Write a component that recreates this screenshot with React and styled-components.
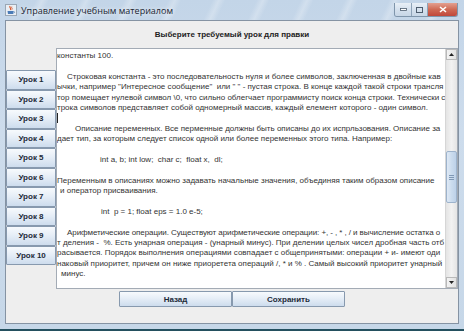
import React from 'react';
import styled, { createGlobalStyle } from 'styled-components';

const GlobalStyle = createGlobalStyle`
  html, body {
    margin: 0;
    padding: 0;
    background: #1f4f5f;
  }
  body {
    font-family: "Liberation Sans", Arial, sans-serif;
  }
`;

const Frame = styled.div`
  width: 464px;
  height: 331px;
  box-sizing: border-box;
  display: flex;
  flex-direction: column;
  background: linear-gradient(180deg, #c3d5e8 0%, #cddcec 40%, #c6d7e8 100%);
  border-bottom: 2px solid #24505f;
  padding: 0 5px 5px 5px;
`;

const TitleBar = styled.div`
  height: 20px;
  display: flex;
  align-items: center;
  gap: 4px;
  background: repeating-linear-gradient(
    115deg,
    rgba(255, 255, 255, 0) 0px,
    rgba(255, 255, 255, 0) 28px,
    rgba(255, 255, 255, 0.25) 34px,
    rgba(255, 255, 255, 0) 40px
  );
`;

const Title = styled.span`
  flex: 1;
  font-family: "Open Sans", "Liberation Sans", sans-serif;
  font-size: 9px;
  color: #1b2633;
  text-shadow: 0 0 4px rgba(255, 255, 255, 0.9);
  white-space: nowrap;
`;

const Captions = styled.div`
  display: flex;
  align-self: flex-start;
  margin-top: 3px;
  margin-right: 1px;
  height: 13px;
  border: 1px solid #7f95ab;
  border-top: none;
  border-radius: 0 0 3px 3px;
  overflow: hidden;
`;

const CaptionButton = styled.div`
  width: ${(p) => p.$w}px;
  display: flex;
  align-items: center;
  justify-content: center;
  background: ${(p) =>
    p.$close
      ? 'linear-gradient(180deg, #e3a090 0%, #cf6a55 50%, #c0473a 100%)'
      : 'linear-gradient(180deg, #e8eff6 0%, #d5e1ee 50%, #c7d6e6 100%)'};
  border-left: ${(p) => (p.$first ? 'none' : '1px solid #8ea3b8')};
`;

const Client = styled.div`
  flex: 1;
  min-width: 0;
  display: flex;
  flex-direction: column;
  background: #eeeeee;
  border: 1px solid #8593a3;
`;

const Heading = styled.div`
  height: 27px;
  display: flex;
  align-items: center;
  justify-content: center;
  font-size: 8px;
  font-weight: bold;
  color: #222;
`;

const Body = styled.div`
  display: flex;
  height: 241px;
  min-width: 0;
`;

const LessonColumn = styled.div`
  width: 50px;
  flex-shrink: 0;
  padding-top: 22px;
  display: grid;
  grid-template-rows: repeat(10, 19.5px);
  align-content: start;
`;

const LessonButton = styled.button`
  margin: 0;
  padding: 0;
  border: 1px solid #8799ae;
  border-radius: 1px;
  background: linear-gradient(180deg, #f7fafd 0%, #e6eef7 45%, #cddced 100%);
  font-family: "Liberation Sans", Arial, sans-serif;
  font-size: 8px;
  font-weight: bold;
  white-space: nowrap;
  color: #1d2a38;
`;

const TextPane = styled.div`
  flex: 1;
  min-width: 0;
  display: flex;
  border: 1px solid #a3abb5;
  background: #fff;
`;

const Viewport = styled.div`
  flex: 1;
  min-width: 0;
  overflow: hidden;
  padding-top: 2px;
  font-size: 8px;
  color: #333;
`;

const Line = styled.div`
  height: 10.4px;
  line-height: 10.4px;
  white-space: pre;
  padding-left: ${(p) => p.$indent}px;
  letter-spacing: ${(p) => (p.$tight ? '-0.08px' : 'normal')};
`;

const Caret = styled.span`
  display: inline-block;
  width: 1px;
  height: 10px;
  background: #222;
  vertical-align: top;
`;

const ScrollBar = styled.div`
  width: 11px;
  flex-shrink: 0;
  display: flex;
  flex-direction: column;
  background: linear-gradient(90deg, #e4e4e4, #f2f2f2 50%, #e4e4e4);
  border-left: 1px solid #d6d6d6;
`;

const ArrowButton = styled.div`
  height: 11px;
  display: flex;
  align-items: center;
  justify-content: center;
  background: linear-gradient(90deg, #f3f3f3, #e2e2e2);
  border: 1px solid #b9b9b9;
  box-sizing: border-box;
`;

const Track = styled.div`
  flex: 1;
  display: flex;
  flex-direction: column;
`;

const Gap = styled.div`
  height: ${(p) => p.$h}px;
`;

const Thumb = styled.div`
  height: 50px;
  display: flex;
  flex-direction: column;
  align-items: center;
  justify-content: center;
  gap: 1px;
  border: 1px solid #9db3cc;
  border-radius: 2px;
  background: linear-gradient(90deg, #dfe9f5, #cbdcee 50%, #bdd1e8);
`;

const Grip = styled.div`
  width: 5px;
  height: 1px;
  background: #7f98b5;
`;

const Footer = styled.div`
  flex: 1;
  display: flex;
  justify-content: center;
  align-items: flex-start;
  padding-top: 2px;
`;

const FooterButton = styled.button`
  width: 113px;
  height: 16px;
  margin: 0;
  padding: 0;
  border: 1px solid #8799ae;
  border-radius: 1px;
  background: linear-gradient(180deg, #f7fafd 0%, #e6eef7 45%, #cddced 100%);
  font-family: "Liberation Sans", Arial, sans-serif;
  font-size: 8px;
  font-weight: bold;
  color: #1d2a38;
`;

const lines = [
  { indent: 0, text: 'константы 100.' },
  { indent: 0, text: '' },
  { indent: 10, text: 'Строковая константа - это последовательность нуля и более символов, заключенная в двойные кав' },
  { indent: 0, text: 'ычки, например "Интересное сообщение"  или " " - пустая строка. В конце каждой такой строки трансля' },
  { indent: 0, text: 'тор помещает нулевой символ \\0, что сильно облегчает программисту поиск конца строки. Технически с' },
  { indent: 0, text: 'трока символов представляет собой одномерный массив, каждый елемент которого - один символ.' },
  { indent: 0, text: '', caret: true },
  { indent: 18, text: 'Описание переменных. Все перменные должны быть описаны до их испрльзования. Описание за' },
  { indent: 0, text: 'дает тип, за которым следует список одной или более переменных этого типа. Например:' },
  { indent: 0, text: '' },
  { indent: 43, text: 'int a, b; int low;  char c;  float x,  dl;' },
  { indent: 0, text: '' },
  { indent: 0, text: 'Переменным в описаниях можно задавать начальные значения, объединяя таким образом описание' },
  { indent: 3, text: 'и оператор присваивания.' },
  { indent: 0, text: '' },
  { indent: 44, text: 'int  p = 1; float eps = 1.0 e-5;' },
  { indent: 0, text: '' },
  { indent: 10, tight: true, text: 'Арифметические операции. Существуют арифметические операции: +, - , * , / и вычисление остатка о' },
  { indent: 0, text: 'т деления -  %. Есть унарная операция - (унарный минус). При делении целых чисел дробная часть отб' },
  { indent: 0, text: 'расывается. Порядок выполнения операциями совпадает с общепринятыми: операции + и- имеют оди' },
  { indent: 0, text: 'наковый приоритет, причем он ниже приоретета операций /, * и % . Самый высокий приоритет унарный' },
  { indent: 4, text: 'минус.' },
];

function JavaIcon() {
  return (
    <svg width="12" height="12" viewBox="0 0 12 12">
      <rect x="0.5" y="0.5" width="11" height="11" fill="#e9eef4" stroke="#9aa7b5" />
      <path d="M5 2 C4 3.5 6.5 4 5.5 6" stroke="#d9572b" strokeWidth="1.2" fill="none" />
      <path d="M6.8 2.6 C6 3.8 7.8 4.2 7 5.6" stroke="#d9572b" strokeWidth="0.9" fill="none" />
      <path d="M2.5 7 H8.5 L8 10 H3 Z" fill="#4a7bb7" />
      <path d="M8.5 7.5 C10 7.5 10 9 8.2 9" stroke="#4a7bb7" strokeWidth="0.8" fill="none" />
    </svg>
  );
}

function ArrowIcon({ down }) {
  return (
    <svg width="5" height="3" viewBox="0 0 5 3">
      <path d={down ? 'M0 0 H5 L2.5 3 Z' : 'M0 3 H5 L2.5 0 Z'} fill="#222" />
    </svg>
  );
}

export default function App() {
  return (
    <>
      <GlobalStyle />
      <Frame>
        <TitleBar>
          <JavaIcon />
          <Title>Управление учебным материалом</Title>
          <Captions>
            <CaptionButton $w={16} $first>
              <svg width="7" height="3" viewBox="0 0 7 3">
                <rect x="0.5" y="0.5" width="6" height="2" fill="#fff" stroke="#4d5d6e" strokeWidth="0.8" />
              </svg>
            </CaptionButton>
            <CaptionButton $w={15}>
              <svg width="7" height="6" viewBox="0 0 7 6">
                <rect x="0.5" y="0.5" width="6" height="5" fill="none" stroke="#4d5d6e" strokeWidth="1" />
              </svg>
            </CaptionButton>
            <CaptionButton $w={29} $close>
              <svg width="8" height="7" viewBox="0 0 8 7">
                <path d="M1 1 L7 6 M7 1 L1 6" stroke="#fff" strokeWidth="1.6" />
              </svg>
            </CaptionButton>
          </Captions>
        </TitleBar>
        <Client>
          <Heading>Выберите требуемый урок для правки</Heading>
          <Body>
            <LessonColumn>
              {Array.from({ length: 10 }, (_, i) => (
                <LessonButton key={i}>Урок {i + 1}</LessonButton>
              ))}
            </LessonColumn>
            <TextPane>
              <Viewport>
                {lines.map((l, i) => (
                  <Line key={i} $indent={l.indent} $tight={l.tight}>
                    {l.caret ? <Caret /> : l.text}
                  </Line>
                ))}
              </Viewport>
              <ScrollBar>
                <ArrowButton>
                  <ArrowIcon />
                </ArrowButton>
                <Track>
                  <Gap $h={91} />
                  <Thumb>
                    <Grip />
                    <Grip />
                    <Grip />
                  </Thumb>
                </Track>
                <ArrowButton>
                  <ArrowIcon down />
                </ArrowButton>
              </ScrollBar>
            </TextPane>
          </Body>
          <Footer>
            <FooterButton>Назад</FooterButton>
            <FooterButton>Сохранить</FooterButton>
          </Footer>
        </Client>
      </Frame>
    </>
  );
}
